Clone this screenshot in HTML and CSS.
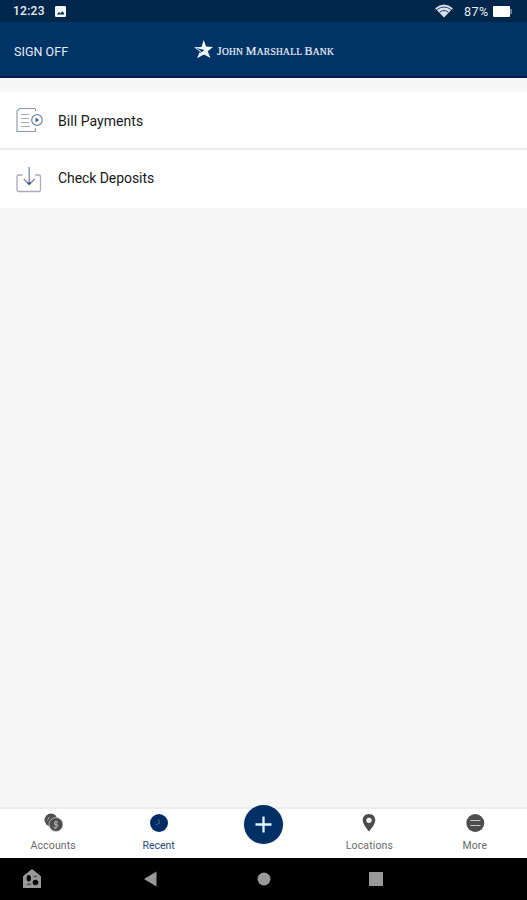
FILE: index.html
```html
<!DOCTYPE html>
<html lang="en">
<head>
<meta charset="utf-8">
<title>John Marshall Bank</title>
<link rel="stylesheet" href="styles.css">
</head>
<body>
<div class="app">
  <div class="status">
    <span class="time">12:23</span>
    <svg class="photo" width="11" height="11" viewBox="0 0 11 11"><rect width="11" height="11" rx="1.2" fill="#f4f6fa"/><path d="M2 8.500 4 6l1.500 1.500L7.500 5 9.500 8.500z" fill="#00264b"/></svg>
    <svg class="wifi" width="18" height="14" viewBox="0 0 18 14"><path d="M0 4.200Q9-3 18 4.200L9 13.500z" fill="#d7dfe8"/><path d="M1.700 5.800Q9 .2 16.300 5.800M4.500 8.300Q9 4.700 13.500 8.300" fill="none" stroke="#264464" stroke-width="1"/></svg>
    <span class="percent">87%</span>
    <svg class="battery" width="20" height="11" viewBox="0 0 20 11"><rect width="17" height="11" rx="1" fill="#fff"/><path d="M18 3v5" stroke="#8496aa" stroke-width="1.500"/></svg>
  </div>
  <header class="header">
    <span class="signoff">SIGN OFF</span>
    <div class="brand">
      <svg width="20" height="19" viewBox="0 0 20 19"><path d="M9.700 0 12.100 6.500 19 7 13.700 11.200 16.500 18 10 14.400 3 18.300 6 11.600 0 7.200 7.500 6.900z" fill="#f5f7fb"/><path d="M2 8 10.500 10 6 13.200 7 11z" fill="#003366"/></svg>
      <span class="wordmark"><b>J</b>OHN <b>M</b>ARSHALL <b>B</b>ANK</span>
    </div>
  </header>
  <main class="content">
    <div class="row">
      <svg width="28" height="28" viewBox="0 0 28 28" fill="none"><path d="M20.500 5V3.500Q20.500 2.500 19.500 2.500H4.500L2 5V25.500H20.500V22" stroke="#8d95aa" stroke-width="1.100"/><path d="M6 8.500H14M6 12.500H14M6 16.500H14M6 20.500H15" stroke="#a6aebf" stroke-width="1.200"/><circle cx="22" cy="14" r="5.300" stroke="#7189b2" stroke-width="1.300"/><path d="M20.500 11.500 24 14 20.500 16.500z" fill="#315b99"/></svg>
      <span class="bill">Bill Payments</span>
    </div>
    <div class="row">
      <svg width="28" height="28" viewBox="0 0 28 28" fill="none"><path d="M7.500 10H3.500Q2 10 2 11.500V25Q2 26.500 3.500 26.500H24Q25.500 26.500 25.500 25V11.500Q25.500 10 24 10H20" stroke="#a7acb8" stroke-width="1.300"/><path d="M14.200 2V19M8.700 14 14.200 19.500 19.700 14" stroke="#7d89b0" stroke-width="1.300"/><path d="M12.200 17.500H16.200L14.200 20z" fill="#273e85"/></svg>
      <span class="check">Check Deposits</span>
    </div>
  </main>
  <nav class="tabs">
    <div class="tab">
      <svg width="20" height="20" viewBox="0 0 20 20"><circle cx="8" cy="7" r="6.500" fill="#4e4e4e"/><path d="M4.300 7.500 6.300 4" stroke="#aaa"/><circle cx="13" cy="11.500" r="7" fill="#4e4e4e" stroke="#ddd" stroke-width=".7"/><path d="M15 9.300Q11.500 7.700 11.300 10T13.500 11.800 13.700 14.200 10.900 13.700M13 7.500V15.500" fill="none" stroke="#b5b5b5"/></svg>
      <span class="accounts">Accounts</span>
    </div>
    <div class="tab active">
      <svg width="20" height="20" viewBox="0 0 20 20"><circle cx="10" cy="10" r="9" fill="#002b66"/><path d="M10 6V10.500L6.500 12" fill="none" stroke="#446497" stroke-width="1.100"/></svg>
      <span class="recent">Recent</span>
    </div>
    <div class="tab">
      <div class="add"><svg width="39" height="39" viewBox="0 0 39 39"><path d="M11.500 19.500H27.500M19.500 11.500V27.500" stroke="#e2f2ff" stroke-width="2.300"/></svg></div>
    </div>
    <div class="tab">
      <svg width="20" height="20" viewBox="0 0 20 20"><path fill-rule="evenodd" d="M10 1C6 1 3.700 3.800 3.700 7.300 3.700 11.500 10 18.500 10 18.500S16.300 11.500 16.300 7.300C16.300 3.800 14 1 10 1M10 4.700A2.600 2.600 0 1 1 10 9.900 2.600 2.600 0 1 1 10 4.700" fill="#4d4d4d"/></svg>
      <span class="locations">Locations</span>
    </div>
    <div class="tab">
      <svg width="20" height="20" viewBox="0 0 20 20"><circle cx="10.300" cy="10" r="9" fill="#4d4d4d"/><path d="M5.300 7.500H15.300M5.300 12.500H15.300" stroke="#c4c4c4" stroke-width="1.200"/></svg>
      <span class="more">More</span>
    </div>
  </nav>
  <div class="system">
    <svg width="18" height="20" viewBox="0 0 18 20"><path d="M9 0 18 7.200V19H0V7.200z" fill="#999"/><ellipse cx="5.800" cy="9.300" rx="2.200" ry="3.200" fill="#080808"/><circle cx="12.500" cy="13.500" r="2.800" fill="#080808"/><path d="M4 15.300H8M10.500 7.500H14" stroke="#555" stroke-width="1.500"/></svg>
    <svg class="back" width="13" height="16" viewBox="0 0 13 16"><path d="M0 8 12.500.5V15.500z" fill="#999"/></svg>
    <svg class="home" width="14" height="14" viewBox="0 0 14 14"><circle cx="7" cy="7" r="6.500" fill="#999"/></svg>
    <svg class="recents" width="14" height="14" viewBox="0 0 14 14"><rect width="14" height="14" rx=".5" fill="#999"/></svg>
  </div>
</div>
</body>
</html>
```
FILE: styles.css
```css
* { box-sizing: border-box; }
body { margin: 0; font-family: Roboto, sans-serif; }
svg { display: block; flex: none; }
span { white-space: nowrap; }
.app { width: 527px; height: 900px; display: flex; flex-direction: column; background: #f7f7f7; }
.status { height: 22px; background: #00264b; color: #e9eef4; display: flex; align-items: center; padding: 0 15px 0 13px; font-size: 12px; font-weight: 500; }
.time { width: 42px; letter-spacing: .25px; }
.wifi { margin-left: auto; }
.percent { width: 29px; margin-left: 11px; font-size: 12.500px; letter-spacing: .5px; font-weight: 400; }
.battery { margin-right: -1px; }
.header { height: 56px; background: #003366; border-bottom: 2px solid #001b50; display: grid; grid-template-columns: 194px 1fr; align-items: center; color: #e8edf5; }
.signoff { padding: 4px 0 0 14px; font-size: 12.500px; letter-spacing: .05px; }
.brand { display: flex; align-items: center; }
.brand svg { margin-top: 1px; }
.wordmark { font-family: "Liberation Serif", serif; font-size: 9.500px; line-height: 14px; letter-spacing: .24px; margin: 4px 0 0 3px; -webkit-text-stroke: .2px #e8edf5; }
.wordmark b { font-weight: 400; font-size: 12px; }
.content { flex: 1; padding-top: 14px; }
.row { height: 58px; background: #fff; display: flex; align-items: center; padding-left: 15px; gap: 15px; font-size: 14px; color: #181818; }
.row:first-child { border-bottom: 2px solid #ededed; }
.row span { line-height: 18px; }
.bill { padding-top: 2px; letter-spacing: .05px; }
.check { padding-bottom: 2px; letter-spacing: -.07px; }
.tabs { height: 51px; background: #fff; border-top: 2px solid #ededed; display: grid; grid-template-columns: repeat(5, 1fr); }
.tab { display: flex; flex-direction: column; align-items: center; padding: 4px 0 0 1px; color: #686868; font-size: 10.500px; }
.tab span { line-height: 14px; margin-top: 6px; }
.accounts, .locations, .more { letter-spacing: .15px; }
.tab.active { color: #234979; }
.add { width: 39px; height: 39px; margin-top: -8px; border-radius: 50%; background: #003066; box-shadow: 0 0 0 1px #f3f5f8; }
.system { height: 42px; background: #000; display: grid; grid-template-columns: 121px 113px 112px 1fr; align-items: center; padding-left: 23px; }
```
